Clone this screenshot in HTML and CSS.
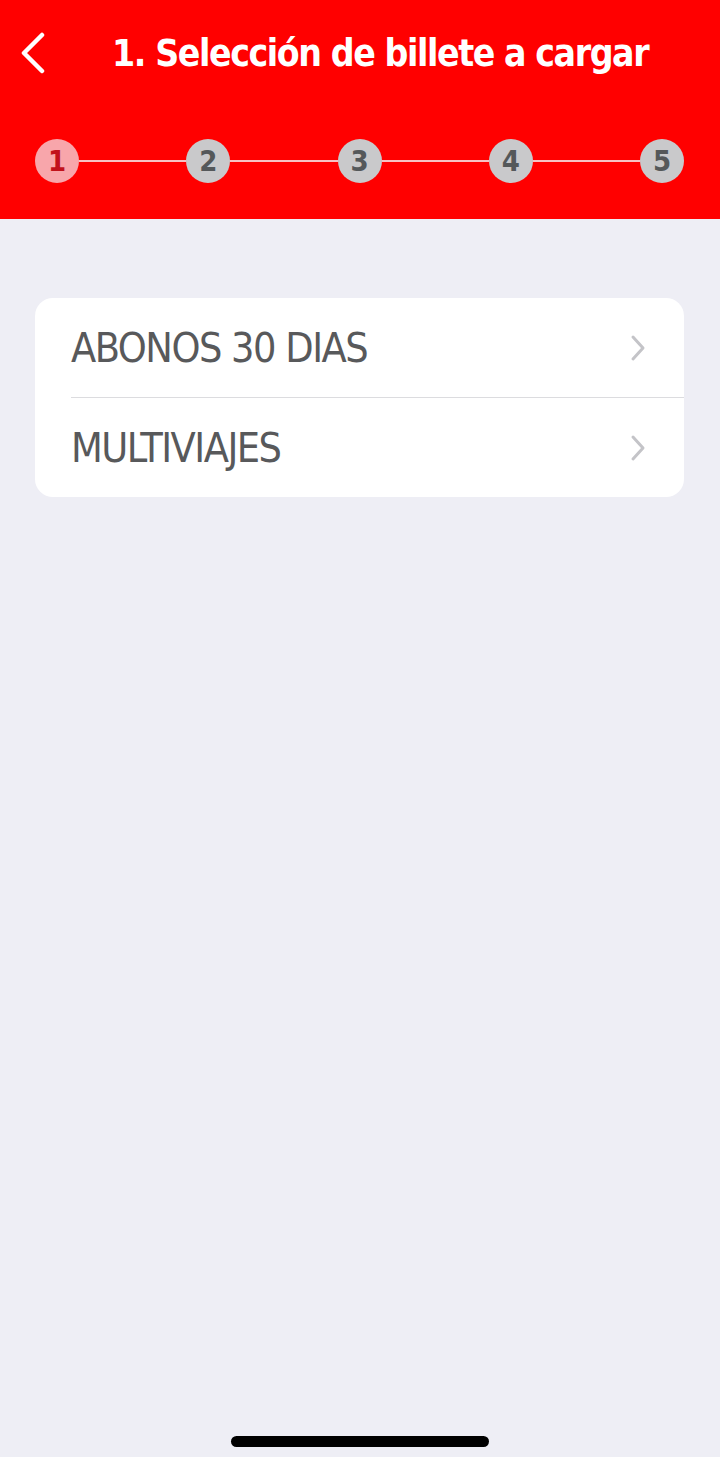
FILE: index.html
```html
<!DOCTYPE html>
<html lang="es">
<head>
    <meta charset="UTF-8">
    <meta name="viewport" content="width=device-width, initial-scale=1.0">
    <title>Selección de billete a cargar</title>
    <link rel="stylesheet" href="styles.css">
</head>
<body>
    <header class="topbar">
        <div class="title-row">
            <button class="back" aria-label="Volver">
                <svg width="28" height="42" viewBox="0 0 28 42">
                    <polyline points="24,3 6,21 24,39" fill="none" stroke="#fff" stroke-width="4.5" stroke-linecap="round" stroke-linejoin="round"/>
                </svg>
            </button>
            <h1>1. Selección de billete a cargar</h1>
        </div>
        <div class="steps">
            <span class="step active">1</span>
            <span class="link"></span>
            <span class="step">2</span>
            <span class="link"></span>
            <span class="step">3</span>
            <span class="link"></span>
            <span class="step">4</span>
            <span class="link"></span>
            <span class="step">5</span>
        </div>
    </header>

    <main class="content">
        <ul class="menu">
            <li class="item">
                <span>ABONOS 30 DIAS</span>
                <svg width="16" height="28" viewBox="0 0 16 28"><polyline points="3,3 13,14 3,25" fill="none" stroke="#c4c4c8" stroke-width="3" stroke-linecap="round" stroke-linejoin="round"/></svg>
            </li>
            <li class="item">
                <span>MULTIVIAJES</span>
                <svg width="16" height="28" viewBox="0 0 16 28"><polyline points="3,3 13,14 3,25" fill="none" stroke="#c4c4c8" stroke-width="3" stroke-linecap="round" stroke-linejoin="round"/></svg>
            </li>
        </ul>
    </main>

    <div class="home-bar"></div>
</body>
</html>
```

FILE: styles.css
```css
body {
    margin: 0;
    width: 720px;
    height: 1457px;
    background-color: #eeeef5;
    font-family: "DejaVu Sans", "Liberation Sans", sans-serif;
    display: flex;
    flex-direction: column;
}
.topbar {
    background-color: #ff0000;
    height: 219px;
    box-sizing: border-box;
    padding-top: 28px;
}
.title-row {
    display: flex;
    align-items: center;
    height: 50px;
}
.back {
    background: none;
    border: none;
    padding: 0;
    margin-left: 18px;
    width: 32px;
    height: 44px;
    display: flex;
    align-items: center;
}
.title-row h1 {
    margin: 0 0 0 62px;
    color: #fff;
    font-size: 37px;
    font-weight: bold;
    font-stretch: condensed;
    letter-spacing: -1.4px;
    white-space: nowrap;
}
.steps {
    display: flex;
    align-items: center;
    margin: 61px 0 0 35px;
    width: 649px;
}
.step {
    width: 44px;
    height: 44px;
    border-radius: 50%;
    background-color: #c9c9cb;
    color: #55585a;
    font-size: 29px;
    font-weight: bold;
    font-stretch: condensed;
    display: flex;
    align-items: center;
    justify-content: center;
    flex-shrink: 0;
}
.step.active {
    background-color: #f8a6ab;
    color: #c2111b;
}
.link {
    flex: 1;
    height: 2px;
    background-color: #f7c1c3;
}
.content {
    flex: 1;
    padding: 79px 36px 0 35px;
}
.menu {
    list-style: none;
    margin: 0;
    padding: 0;
    background-color: #fff;
    border-radius: 18px;
    overflow: hidden;
}
.item {
    height: 99px;
    display: flex;
    align-items: center;
    justify-content: space-between;
    margin-left: 36px;
    padding-right: 38px;
    color: #58595b;
    font-size: 41px;
    font-stretch: condensed;
    letter-spacing: -1.5px;
}
.item + .item {
    border-top: 1px solid #dcdcdf;
}
.home-bar {
    width: 258px;
    height: 11px;
    border-radius: 6px;
    background-color: #000;
    margin: 0 auto 10px;
}
```
